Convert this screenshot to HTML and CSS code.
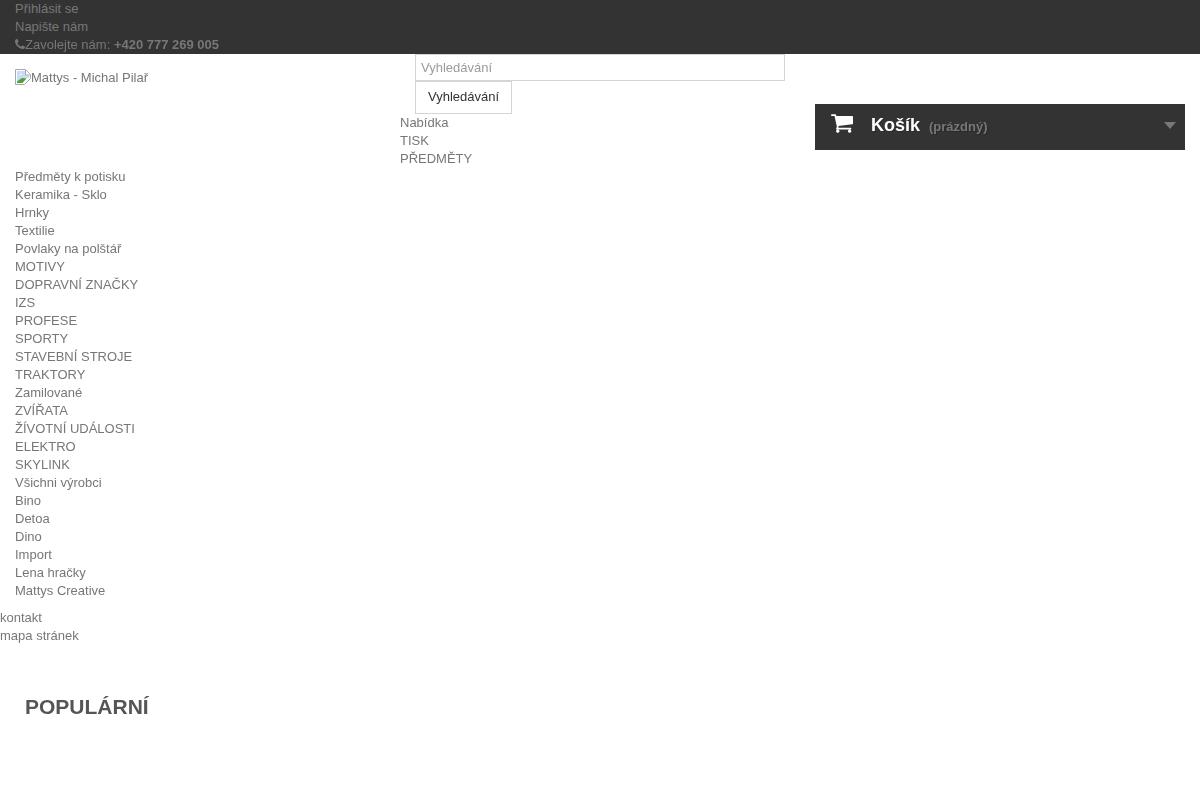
FILE: index.html
```html
<!DOCTYPE html>
<html lang="cs">
<head>
  <meta charset="UTF-8" />
  <title>Mattys - Michal Pilař</title>
  <link rel="stylesheet" href="styles.css">
</head>
<body>
  <div class="topbar">
    <a href="#">Přihlásit se</a>
    <a href="#">Napište nám</a>
    <div><svg class="icon-phone" viewBox="192 128 1408 1408"><path d="M1600 1240q0 27-10 70.500t-21 68.500q-21 50-122 106-94 51-186 51-27 0-53-3.500t-57.500-12.500-47-14.500-55.500-20.500-49-18q-98-35-175-83-127-79-264-216t-216-264q-48-77-83-175-3-9-18-49t-20.500-55.500-14.500-47-12.500-57.500-3.500-53q0-92 51-186 56-101 106-122 25-11 68.500-21t70.500-10q14 0 21 3 18 6 53 76 11 19 30 54t35 63.500 31 53.500q3 4 17.500 25t21.500 35.500 7 28.500q0 20-28.500 50t-62 55-62 53-28.500 46q0 9 5 22.500t8.500 20.500 14 24 11.500 19q76 137 174 235t235 174q2 1 19 11.500t24 14 20.500 8.500 22.500 5q18 0 46-28.500t53-62 55-62 50-28.500q14 0 28.500 7t35.500 21.500 25 17.500q25 15 53.500 31t63.500 35 54 30q70 35 76 53 3 7 3 21z"/></svg>Zavolejte nám: <strong>+420 777 269 005</strong></div>
  </div>

  <header class="header">
    <a href="#" class="logo">
      <svg class="broken-img" viewBox="0 0 16 16">
        <path d="M.5 15.500V.5h10l5 5v4l-6 6z" fill="#fff" stroke="#a8a8a8"/>
        <path d="M2 2h8v4.500h4v2.500l-3 .5-5 1-4 3z" fill="#c9daf4"/>
        <path d="M4 5.500c.6-1.300 2.800-1.300 3.400 0z" fill="#fff"/>
        <path d="M2 14v-1.500l5-3.500 4.500.5-4 4.500z" fill="#4f9e3a"/>
        <path d="M10.500 1v5h5" fill="#fff" stroke="#a8a8a8"/>
      </svg>Mattys - Michal Pilař
    </a>
    <div class="center">
      <form class="search">
        <input type="text" placeholder="Vyhledávání" />
        <button type="button">Vyhledávání</button>
      </form>
      <ul class="menu-main">
        <li>Nabídka</li>
        <li>TISK</li>
        <li>PŘEDMĚTY</li>
      </ul>
    </div>
    <a href="#" class="cart">
      <svg class="icon-cart" viewBox="64 256 1664 1408"><path d="M704 1536q0 52-38 90t-90 38-90-38-38-90 38-90 90-38 90 38 38 90zm896 0q0 52-38 90t-90 38-90-38-38-90 38-90 90-38 90 38 38 90zm128-1088v512q0 24-16.500 42.500t-40.500 21.500l-1044 122q13 60 13 70 0 16-24 64h920q26 0 45 19t19 45-19 45-45 19h-1024q-26 0-45-19t-19-45q0-11 8-31.500t16-36 21.500-40 15.500-29.500l-177-823h-204q-26 0-45-19t-19-45 19-45 45-19h256q16 0 28.500 6.500t19.500 15.500 13 24.500 8 26 5.500 29.500 4.500 26h1201q26 0 45 19t19 45z"/></svg>
      <b>Košík</b>
      <span class="cart-empty">(prázdný)</span>
      <i class="cart-arrow"></i>
    </a>
  </header>

  <ul class="menu-side">
    <li>Předměty k potisku</li>
    <li>Keramika - Sklo</li>
    <li>Hrnky</li>
    <li>Textilie</li>
    <li>Povlaky na polštář</li>
    <li>MOTIVY</li>
    <li>DOPRAVNÍ ZNAČKY</li>
    <li>IZS</li>
    <li>PROFESE</li>
    <li>SPORTY</li>
    <li>STAVEBNÍ STROJE</li>
    <li>TRAKTORY</li>
    <li>Zamilované</li>
    <li>ZVÍŘATA</li>
    <li>ŽÍVOTNÍ UDÁLOSTI</li>
    <li>ELEKTRO</li>
    <li>SKYLINK</li>
    <li>Všichni výrobci</li>
    <li>Bino</li>
    <li>Detoa</li>
    <li>Dino</li>
    <li>Import</li>
    <li>Lena hračky</li>
    <li>Mattys Creative</li>
  </ul>

  <ul class="menu-foot">
    <li>kontakt</li>
    <li>mapa stránek</li>
  </ul>

  <h2 class="popular">POPULÁRNÍ</h2>
</body>
</html>
```

FILE: styles.css
```css
* {
  box-sizing: border-box;
}
html, body {
  height: 800px;
  overflow: hidden;
}
body {
  margin: 0;
  background-color: #fff;
  color: #777;
  font-family: "Liberation Sans", Arial, Helvetica, sans-serif;
  font-size: 13px;
  line-height: 18px;
  will-change: opacity;
}
a {
  color: inherit;
  text-decoration: none;
}
ul {
  list-style: none;
  margin: 0;
  padding: 0;
}
.topbar {
  height: 54px;
  padding: 0 15px;
  background-color: #333;
  color: #777;
}
.topbar a {
  display: block;
}
.icon-phone {
  width: 10px;
  height: 10px;
  fill: #777;
  vertical-align: 0;
}
.header {
  display: flex;
  height: 114px;
}
.logo {
  flex: none;
  width: 400px;
  padding: 15px 15px 0;
}
.broken-img {
  width: 16px;
  height: 16px;
  vertical-align: -3px;
}
.center {
  flex: none;
  width: 400px;
}
.search {
  padding: 0 15px;
}
.search input {
  display: block;
  width: 370px;
  height: 27px;
  padding: 0 5px;
  border: 1px solid #d6d4d4;
  border-radius: 0;
  outline: none;
  font: 13px "Liberation Sans", Arial, sans-serif;
}
.search input::placeholder {
  color: #9c9b9b;
}
.search button {
  display: block;
  height: 33px;
  padding: 0 12px 2px;
  border: 1px solid #d6d4d4;
  background-color: #fff;
  color: #333;
  font: 13px "Liberation Sans", Arial, sans-serif;
}
.cart {
  display: flex;
  align-items: center;
  flex: none;
  position: relative;
  width: 370px;
  height: 46px;
  margin: 50px 0 0 15px;
  padding: 0 0 4px 16px;
  background-color: #333;
  color: #fff;
  text-shadow: 1px 1px rgba(0, 0, 0, 0.2);
}
.icon-cart {
  width: 22px;
  height: 19px;
  margin: 0 18px 3px 0;
  fill: #fff;
}
.cart b {
  font-size: 18px;
}
.cart-empty {
  margin: 3px 0 0 9px;
  color: #777;
  font-weight: bold;
}
.cart-arrow {
  position: absolute;
  top: 18px;
  right: 9px;
  border-top: 7px solid #777;
  border-left: 6.500px solid transparent;
  border-right: 6.500px solid transparent;
}
.menu-side {
  padding-left: 15px;
}
.menu-foot {
  margin-top: 9px;
}
.popular {
  margin: 49px 0 0;
  padding-left: 25px;
  color: #555;
  font-size: 21px;
  line-height: 26px;
}
```
